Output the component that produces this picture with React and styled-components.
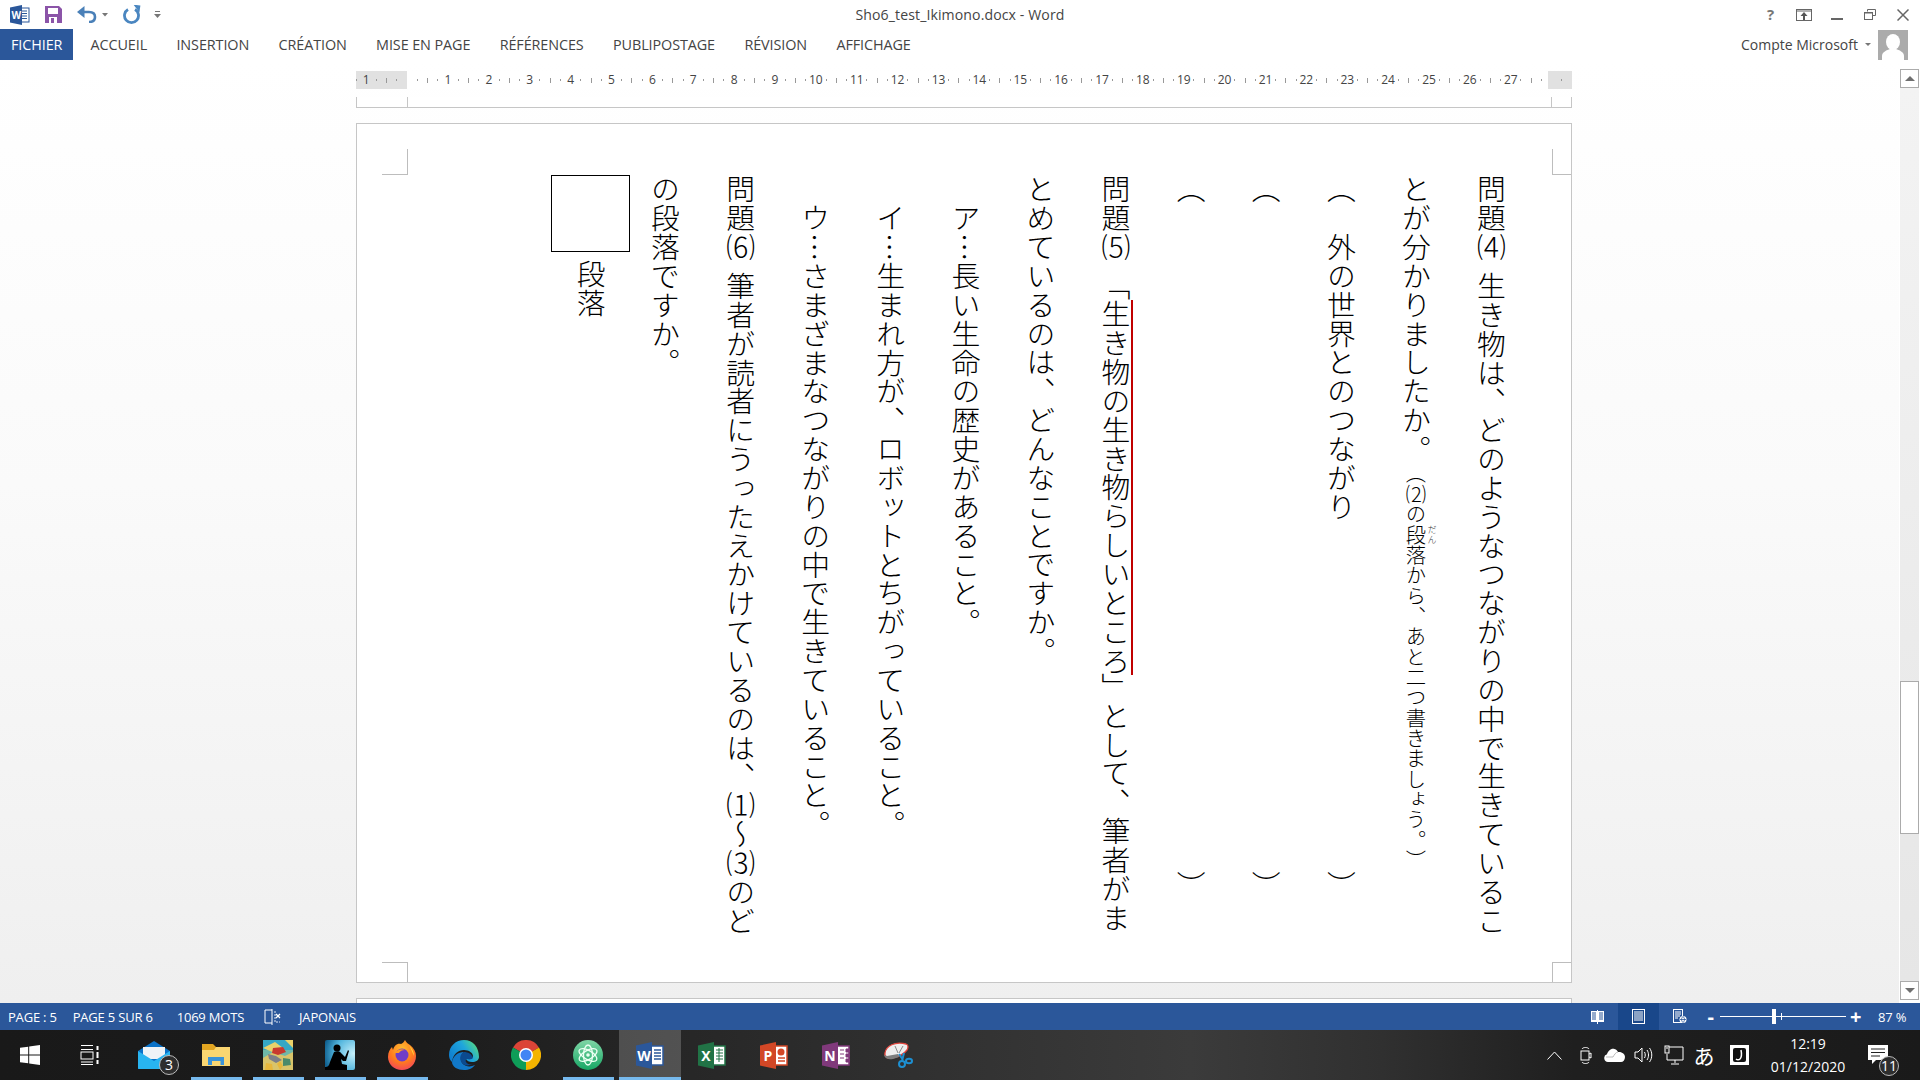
import React from "react";
import styled, { createGlobalStyle } from "styled-components";

const Global = createGlobalStyle`
  html, body { margin: 0; padding: 0; background: #fff; }
  #root { width: 1920px; height: 1080px; }
  * { box-sizing: border-box; }
`;

const UI = `"Open Sans", "Noto Sans", sans-serif`;

const Shell = styled.div`
  width: 1920px; height: 1080px; overflow: hidden;
  display: flex; flex-direction: column;
  font-family: ${UI}; background: #fff;
`;

const TitleBar = styled.div`
  height: 29px; flex: none; display: grid; grid-template-columns: 1fr auto 1fr; align-items: center;
`;
const Quick = styled.div`display: flex; align-items: center; padding-left: 10px; height: 100%;`;
const QuickSlot = styled.span`display: inline-flex; width: ${p => p.$w}px; align-items: center;`;
const DocTitle = styled.div`font-size: 14.1px; color: #444; letter-spacing: .1px;`;
const WinControls = styled.div`display: flex; justify-content: flex-end; align-items: center; padding-right: 1px;`;
const WinBtn = styled.span`display: inline-flex; width: 33px; justify-content: center; align-items: center; color: #666;`;
const Help = styled.span`font-size: 15px; font-weight: 700; color: #777; line-height: 1;`;

const TabRow = styled.div`height: 31px; flex: none; display: flex; justify-content: space-between; align-items: stretch;`;
const Tabs = styled.div`display: flex; align-items: stretch;`;
const Tab = styled.div`
  padding: 0 ${p => (p.$file ? 11 : 14.7)}px;
  display: flex; align-items: center;
  font-size: 14.4px; letter-spacing: -.1px;
  color: ${p => (p.$file ? "#fff" : "#444")};
  background: ${p => (p.$file ? "#2b579a" : "transparent")};
  margin-right: ${p => (p.$file ? 2.5 : 0)}px;
`;
const Account = styled.div`display: flex; align-items: center; gap: 7px; padding-right: 12px; font-size: 14px; color: #444;`;
const Caret = styled.span`width: 0; height: 0; border: 3px solid transparent; border-top: 3px solid #777; margin-top: 3px;`;
const Avatar = styled.div`width: 30px; height: 30px; background: #ababab; overflow: hidden;`;

const Workspace = styled.div`flex: 1; display: flex; min-height: 0;`;
const Canvas = styled.div`
  flex: 1; min-width: 0; padding: 11px 0 0 356px; overflow: hidden;
  background: linear-gradient(180deg, #ffffff 0%, #fafafa 45%, #efefef 100%);
`;
const Ruler = styled.div`
  width: 1216px; height: 18px; display: flex; align-items: center;
  background: linear-gradient(90deg, #e1e1e1 0 51px, #fff 51px 1192px, #e1e1e1 1192px 100%);
`;
const MarkSlot = styled.div`
  flex: none; width: 10.225px; display: flex; justify-content: center; align-items: center;
  &:first-child { margin-left: -5.1px; }
`;
const RulerNum = styled.span`font-size: 12px; color: #444; line-height: 1; white-space: nowrap;`;
const Dot = styled.span`width: 1px; height: 2px; background: #999; flex: none;`;
const Tick = styled.span`width: 1px; height: 5px; background: #999; flex: none;`;

const PageStub = styled.div`
  width: 1216px; height: 11px; margin-top: 8px; background: #fff;
  border: 1px solid #c6c6c6; border-top: 0; position: relative;
`;
const StubMark = styled.span`position: absolute; top: 0; bottom: 0; width: 1px; background: #c6c6c6; ${p => p.$side}: ${p => p.$at}px;`;

const Page = styled.div`
  position: relative; width: 1216px; height: 860px; margin-top: 15px; background: #fff;
  border: 1px solid #c6c6c6;
  padding: 51px 42px 0 0; display: flex; flex-direction: row-reverse; align-items: flex-start;
  font-family: "Noto Sans CJK JP", sans-serif; font-weight: 300; color: #000;
`;
const NextPage = styled.div`width: 1216px; height: 30px; margin-top: 15px; background: #fff; border: 1px solid #c6c6c6;`;

const Crop = styled.span`
  position: absolute; width: ${p => (p.$right ? 19 : 26)}px; height: ${p => (p.$bottom ? 20 : 26)}px;
  ${p => (p.$right ? "right: 0;" : "left: 25px;")}
  ${p => (p.$bottom ? "bottom: 0;" : "top: 25px;")}
  border-color: #bdbdbd; border-style: solid; border-width: 0;
  ${p => (p.$right ? "border-left-width: 1px;" : "border-right-width: 1px;")}
  ${p => (p.$bottom ? "border-top-width: 1px;" : "border-bottom-width: 1px;")}
`;

const Col = styled.div`
  flex: none; width: 75.1px; height: 800px;
  writing-mode: vertical-rl; text-orientation: mixed;
  font-size: 28.85px; line-height: 75px; white-space: nowrap;
  text-spacing-trim: space-all; font-kerning: none;
  padding-top: ${p => p.$indent || 0}px;
`;
const ParenCol = styled(Col)`display: flex; justify-content: space-between; height: ${p => p.$len}px; `;
const Gap = styled.span`display: inline-block; height: ${p => p.$h}px; width: 1px;`;
const Under = styled.span`
  display: inline-block; line-height: 29px; border-right: 2px solid #c00000; margin-bottom: -3px;
`;
const Small = styled.span`font-size: 20.35px;`;
const Ruby = styled.ruby`line-height: 1; ruby-position: over;`;
const Rt = styled.rt`font-size: 9px; color: #333; transform: translate(5px, -2px);`;
const BoxCol = styled.div`flex: none; width: 75.1px; display: flex; flex-direction: column; align-items: center;`;
const AnswerBox = styled.div`flex: none; width: 79px; height: 77px; border: 1.5px solid #000;`;
const BoxLabel = styled.div`
  writing-mode: vertical-rl; font-size: 28.85px; line-height: 1; margin-top: 8px; text-spacing-trim: space-all;
`;

const ScrollBar = styled.div`flex: none; width: 21px; padding: 9px 1px 3px 1px; display: flex; flex-direction: column;`;
const ScrollBtn = styled.div`
  flex: none; width: 19px; height: 19px; border: 1px solid #ababab; background: #fff;
  display: flex; align-items: center; justify-content: center;
`;
const Arrow = styled.span`
  width: 0; height: 0; border-left: 5px solid transparent; border-right: 5px solid transparent;
  ${p => (p.$down ? "border-top: 5px solid #6f6f6f;" : "border-bottom: 5px solid #6f6f6f;")}
`;
const Track = styled.div`
  flex: 1; width: 19px; padding-top: 593px;
  background: linear-gradient(180deg, #f3f3f3, #e6e6e6);
`;
const Thumb = styled.div`width: 19px; height: 153px; border: 1px solid #ababab; background: #fff;`;

const StatusBar = styled.div`
  height: 27px; flex: none; background: #2b579a; color: #fff; display: flex; align-items: center;
  justify-content: space-between; font-size: 13px; letter-spacing: -.2px;
`;
const StatusLeft = styled.div`display: flex; align-items: center; padding-left: 8px;`;
const StatusItem = styled.span`margin-right: ${p => p.$mr}px; white-space: nowrap; display: inline-flex;`;
const StatusRight = styled.div`display: flex; align-items: stretch; height: 100%; padding-right: 6px;`;
const ViewBtn = styled.span`
  width: 41px; display: flex; align-items: center; justify-content: center;
  background: ${p => (p.$on ? "#19478a" : "transparent")};
`;
const Zoom = styled.div`display: flex; align-items: center; margin-left: 6px;`;
const Slider = styled.div`position: relative; width: 126px; height: 1px; background: #fff; margin: 0 5px;`;
const SliderThumb = styled.span`position: absolute; left: 52px; top: -7px; width: 4px; height: 15px; background: #fff;`;
const SliderMid = styled.span`position: absolute; left: 61px; top: -3px; width: 1px; height: 7px; background: #fff;`;
const ZoomSign = styled.span`font-size: 20px; font-weight: 700; line-height: 1; width: 9px; display: flex; justify-content: center;`;
const ZoomPct = styled.span`margin-left: 18px; width: 36px; white-space: nowrap;`;

const Taskbar = styled.div`
  height: 50px; flex: none; display: flex; align-items: stretch; color: #fff;
  background: linear-gradient(90deg, #191919 0%, #1c1c1c 22%, #2e2e2e 45%, #3b3b3b 62%, #303030 72%, #1f1f1f 82%, #1a1a1a 100%);
`;
const Launcher = styled.div`flex: none; width: 60px; display: flex; align-items: center; justify-content: center;`;
const Apps = styled.div`display: flex; margin-left: 3px;`;
const AppCell = styled.div`
  position: relative; width: 62px; display: flex; align-items: center; justify-content: center;
  background: ${p => (p.$active ? "rgba(255,255,255,.2)" : "transparent")};
  &::after {
    content: ""; position: absolute; bottom: 0; height: 3px; background: #76b9ed;
    left: ${p => (p.$active ? 0 : 5.5)}px; right: ${p => (p.$active ? 0 : 5.5)}px;
    display: ${p => (p.$open ? "block" : "none")};
  }
`;
const Badge = styled.span`
  position: absolute; right: ${p => p.$r}px; bottom: ${p => p.$b}px; width: 20px; height: 20px; border-radius: 50%;
  background: #2e2e2e; border: 1px solid #bbb; font-size: 14px; color: #fff;
  display: flex; align-items: center; justify-content: center; line-height: 1;
`;
const Tray = styled.div`margin-left: auto; display: flex; align-items: stretch; padding-right: 16px;`;
const TrayCell = styled.div`width: ${p => p.$w}px; display: flex; align-items: center; justify-content: center;`;
const ImeGlyph = styled.span`font-family: "Noto Sans CJK JP", sans-serif; font-size: 21px; line-height: 1;`;
const Clock = styled.div`
  width: 88px; margin-left: 6px; display: flex; flex-direction: column; align-items: center; justify-content: center;
  gap: 5px; font-size: 14px; line-height: 18px;
`;
const Notify = styled.div`position: relative; width: 52px; display: flex; align-items: center; justify-content: center;`;

/* ---------- icons ---------- */
const WordSmall = () => (
  <svg width="20" height="20" viewBox="0 0 20 20">
    <rect x="7" y="3" width="12" height="14" fill="#fff" stroke="#2b579a" />
    <path d="M10 6h7M10 8.500h7M10 11h7M10 13.500h7" stroke="#2b579a" />
    <path d="M0 2.500 12 0v20L0 17.500z" fill="#2b579a" />
    <text x="1.500" y="14" fontSize="10" fontWeight="700" fill="#fff" fontFamily="Open Sans">W</text>
  </svg>
);
const SaveIcon = () => (
  <svg width="17" height="17" viewBox="0 0 17 17">
    <path d="M0 0h14l3 3v14H0z" fill="#8b54a8" />
    <rect x="3" y="2" width="10" height="6" fill="#fff" />
    <rect x="4" y="11" width="8" height="6" fill="#fff" />
    <rect x="6" y="12" width="3" height="5" fill="#8b54a8" />
  </svg>
);
const UndoIcon = () => (
  <svg width="20" height="17" viewBox="0 0 20 17">
    <path d="M3 6h9c4 0 6 2 6 5s-2 5-6 5" fill="none" stroke="#4a80b8" strokeWidth="2.600" />
    <path d="M7.500 0v12L0 6z" fill="#4a80b8" />
  </svg>
);
const RedoIcon = () => (
  <svg width="18" height="19" viewBox="0 0 18 19">
    <path d="M5 4.500a7 7 0 1 0 7 0" fill="none" stroke="#4a86c0" strokeWidth="2.800" />
    <path d="M10 0h7v7z" fill="#4a86c0" transform="rotate(8 13 3)" />
  </svg>
);
const SmallCaret = () => <svg width="6" height="4" viewBox="0 0 6 4"><path d="M0 0h6L3 3.500z" fill="#777" /></svg>;
const CustomizeIcon = () => (
  <svg width="7" height="8" viewBox="0 0 7 8"><path d="M1 0h5v1H1z" fill="#777" /><path d="M0 3h7L3.500 7z" fill="#777" /></svg>
);
const RibbonIcon = () => (
  <svg width="16" height="12" viewBox="0 0 16 12">
    <rect x=".5" y=".5" width="15" height="11" fill="none" stroke="#666" />
    <path d="M1 2h14" stroke="#666" />
    <path d="M8 3 4.500 7H7v4h2V7h2.500z" fill="#555" />
  </svg>
);
const MinIcon = () => <svg width="12" height="2" viewBox="0 0 12 2" style={{ marginTop: 8 }}><path d="M0 1h12" stroke="#666" strokeWidth="2" /></svg>;
const RestoreIcon = () => (
  <svg width="12" height="11" viewBox="0 0 12 11">
    <path d="M3.500 2.500V.5h8v6H8.500" fill="none" stroke="#666" />
    <rect x=".5" y="3.500" width="8" height="7" fill="none" stroke="#666" />
    <path d="M1 4h7" stroke="#666" />
  </svg>
);
const CloseIcon = () => <svg width="12" height="12" viewBox="0 0 12 12"><path d="M.5.500l11 11M11.500.5l-11 11" stroke="#666" strokeWidth="1.500" /></svg>;
const Person = () => (
  <svg width="30" height="30" viewBox="0 0 30 30">
    <rect width="30" height="30" fill="#ababab" />
    <ellipse cx="15" cy="12" rx="7" ry="8" fill="#fff" />
    <path d="M4 30v-4c0-4 5-6 8-7h6c3 1 8 3 8 7v4z" fill="#fff" />
  </svg>
);
const ProofIcon = () => (
  <svg width="18" height="16" viewBox="0 0 18 16">
    <path d="M8 1H1v13h7M8 0v16" fill="none" stroke="#fff" />
    <path d="M11 2v11h5" fill="none" stroke="#dfe7f3" strokeDasharray="2 1" />
    <path d="M12 5l4 4M16 5l-4 4" stroke="#fff" strokeWidth="1.300" />
  </svg>
);
const ReadIcon = () => (
  <svg width="13" height="14" viewBox="0 0 13 14">
    <path d="M0 1h6v11H0zM7 1h6v11H7z" fill="#fff" />
    <path d="M1 3h4M1 5h4M1 7h4M1 9h4M8 3h4M8 5h4M8 7h4M8 9h4" stroke="#2b579a" />
    <path d="M6.500 0v14" stroke="#fff" />
  </svg>
);
const PrintIcon = () => (
  <svg width="13" height="15" viewBox="0 0 13 15">
    <rect x=".5" y=".5" width="12" height="14" fill="none" stroke="#fff" />
    <path d="M2 3h9M2 5h9M2 7h9M2 9h9M2 11h9" stroke="#fff" />
  </svg>
);
const WebIcon = () => (
  <svg width="14" height="15" viewBox="0 0 14 15">
    <rect x=".5" y=".5" width="9" height="13" fill="none" stroke="#fff" />
    <path d="M2 3h6M2 5h6M2 7h5M2 9h3" stroke="#fff" />
    <circle cx="10" cy="10.500" r="3.500" fill="#fff" />
    <path d="M7 10.500h6M10 7.500c-2 2-2 4 0 6M10 7.500c2 2 2 4 0 6" stroke="#2b579a" strokeWidth=".8" fill="none" />
  </svg>
);
const WinLogo = () => (
  <svg width="20" height="20" viewBox="0 0 20 20">
    <path d="M0 2.800 8.200 1.700v7.800H0zM9.200 1.500 20 0v9.500H9.200zM0 10.500h8.200v7.800L0 17.200zM9.200 10.500H20V20L9.200 18.500z" fill="#fff" />
  </svg>
);
const TaskViewIcon = () => (
  <svg width="20" height="20" viewBox="0 0 20 20" fill="none" stroke="#fff">
    <path d="M1 .5h12M1 4.500h12" /><rect x="1" y="7" width="12" height="7" />
    <path d="M1 17h12M1 19.500h12" /><path d="M17.500 1v4M17.500 7v6M17.500 15v4" strokeWidth="2" />
  </svg>
);
const MailIcon = () => (
  <svg width="32" height="28" viewBox="0 0 32 28">
    <path d="M0 10 16 0l16 10v18H0z" fill="#0a72c8" />
    <path d="M5 4h22v12H5z" fill="#eef3f7" transform="translate(0 2)" />
    <path d="M0 10l16 10 16-10v17a1 1 0 0 1-1 1H1a1 1 0 0 1-1-1z" fill="#28b4f0" />
  </svg>
);
const FolderIcon = () => (
  <svg width="28" height="24" viewBox="0 0 28 24">
    <path d="M0 1h11l3 3h-14z" fill="#e2a521" />
    <path d="M0 4h28v19H0z" fill="#fad671" />
    <path d="M0 4h14l-2 3H0z" fill="#e2a521" />
    <path d="M6 22V14h16v8h-3.500v-4H10v4z" fill="#3b93d8" />
  </svg>
);
const PhotoTile = () => (
  <svg width="30" height="30" viewBox="0 0 30 30">
    <rect width="30" height="30" fill="#6fb8a8" />
    <rect width="30" height="10" fill="#35a7c4" />
    <path d="M0 8 12 2l8 6-6 6zM22 0h8v8z" fill="#e9d26a" />
    <path d="M0 18l10-6 12 4 8-4v18H0z" fill="#d9c46a" />
    <path d="M10 8l10-1 3 5-8 3-6-2z" fill="#c8392e" />
    <path d="M5 14l8 2 6 4-6 3-7-4z" fill="#7c7f88" />
    <path d="M20 18l7 1 1 6-8 1z" fill="#4b8a6a" />
    <path d="M3 23l6 1 1 6H2zM14 24l3-3 3 5-3 4z" fill="#e7b73c" />
  </svg>
);
const KindleIcon = () => (
  <svg width="30" height="30" viewBox="0 0 30 30">
    <defs><radialGradient id="kg" cx=".95" cy=".45" r="1"><stop offset="0" stopColor="#c5f0fb" /><stop offset=".6" stopColor="#52b5dd" /><stop offset="1" stopColor="#10608f" /></radialGradient></defs>
    <rect width="30" height="30" rx="2" fill="url(#kg)" />
    <circle cx="12" cy="8" r="3.500" />
    <path d="M9 12c3-1.500 6-1 7 1l4 4 3-7 1 1-3 10h-3l-2-2 1 5 5 1v5H0v-3c3 0 4-1 5-5z" />
  </svg>
);
const FirefoxIcon = () => (
  <svg width="28" height="30" viewBox="0 0 28 30">
    <defs><radialGradient id="ff" cx=".5" cy=".3" r=".8"><stop offset="0" stopColor="#ffbd2f" /><stop offset=".55" stopColor="#ff7a1f" /><stop offset="1" stopColor="#f0386b" /></radialGradient></defs>
    <path d="M14 30C6 30 0 24 0 17 0 12 2 9 4 7l1 3C6 6 9 3 13 4c3-1 3-3 4-4 1 2 3 4 5 5 4 3 6 7 6 11 0 8-6 14-14 14z" fill="url(#ff)" />
    <path d="M21 5c3 3 5 7 5 11-2-4-3-8-5-11z" fill="#ffd83a" />
    <circle cx="14" cy="15" r="6.500" fill="#6f3dc8" />
    <path d="M7 13c2-3 6-5 10-3-3 0-5 1-6 3z" fill="#ff9a1f" />
  </svg>
);
const EdgeIcon = () => (
  <svg width="30" height="30" viewBox="0 0 30 30">
    <defs>
      <linearGradient id="eg" x1="0" y1=".7" x2="1" y2=".2"><stop offset="0" stopColor="#0f7fcf" /><stop offset=".55" stopColor="#1fa6dc" /><stop offset="1" stopColor="#5ae07a" /></linearGradient>
    </defs>
    <path d="M30 17c0 3-3 5-7 5-3 0-5-1-6-3 4 0 7-1 7-3 0-3-4-6-9-6-6 0-11 4-12 12C1 20 0 18 0 15 0 6 7 0 15 0c9 0 15 7 15 17z" fill="url(#eg)" />
    <path d="M3 22c0 5 6 8 12 8 5 0 9-2 11-5-4 2-9 2-12-1-3-3-3-9 1-12-6 0-11 4-12 10z" fill="#1178c8" />
    <path d="M15 12c-4 2-5 7-2 11 2 3 7 3 11 1-3 1-6 0-7-2-1-1 0-3 1-3 3 1 5 0 6-1-1-4-5-6-9-6z" fill="#0b4a8f" />
  </svg>
);
const ChromeIcon = () => (
  <svg width="30" height="30" viewBox="0 0 30 30">
    <path d="M15 15 2 7.500A15 15 0 0 1 28 7.500Z" fill="#db4437" />
    <path d="M15 15 28 7.500A15 15 0 0 1 15 30Z" fill="#f4b400" />
    <path d="M15 15V30A15 15 0 0 1 2 7.500Z" fill="#0f9d58" />
    <circle cx="15" cy="15" r="7" fill="#fff" />
    <circle cx="15" cy="15" r="5.500" fill="#4285f4" />
  </svg>
);
const AtomIcon = () => (
  <svg width="30" height="30" viewBox="0 0 30 30">
    <defs><linearGradient id="ag" x1="0" y1="0" x2="0" y2="1"><stop offset="0" stopColor="#7fd6a6" /><stop offset="1" stopColor="#18a765" /></linearGradient></defs>
    <circle cx="15" cy="15" r="15" fill="url(#ag)" />
    <g fill="none" stroke="#eafff2" strokeWidth="1.300">
      <ellipse cx="15" cy="15" rx="10" ry="4.500" transform="rotate(30 15 15)" />
      <ellipse cx="15" cy="15" rx="10" ry="4.500" transform="rotate(-30 15 15)" />
      <ellipse cx="15" cy="15" rx="10" ry="4.500" transform="rotate(90 15 15)" />
    </g>
    <circle cx="15" cy="15" r="1.800" fill="#eafff2" />
  </svg>
);
const OfficeIcon = ({ color, letter, children }) => (
  <svg width="28" height="27" viewBox="0 0 28 27">
    <rect x="14" y="4" width="13" height="19" fill="#fff" stroke={color} strokeWidth="1.500" />
    {children}
    <path d="M0 3.500 16 0v27L0 23.500z" fill={color} />
    <text x="8" y="19" textAnchor="middle" fontSize="14" fontWeight="700" fill="#fff" fontFamily="Open Sans">{letter}</text>
  </svg>
);
const SnipIcon = () => (
  <svg width="30" height="28" viewBox="0 0 30 28">
    <path d="M2 12C3 5 12 0 23 3c3 1 2 4 1 6-3 4-9 7-15 8-4 1-8-1-7-5z" fill="#eee" stroke="#e0443c" strokeWidth="1.300" />
    <path d="M1 14c1 4 5 5 9 4l6-2-1-3L4 15z" fill="#7d7d7d" />
    <path d="M12 5l3 7M20 5l-4 7" stroke="#888" />
    <g fill="none" stroke="#1d8fd1" strokeWidth="2">
      <path d="M16 13l4 6M21 12l-2 8" />
      <circle cx="19" cy="23" r="3" />
      <ellipse cx="26" cy="20" rx="3" ry="2.200" />
    </g>
  </svg>
);
const CaretUp = () => <svg width="15" height="9" viewBox="0 0 15 9"><path d="M.5 8.500l7-7.500 7 7.500" fill="none" stroke="#fff" /></svg>;
const MeetIcon = () => (
  <svg width="13" height="19" viewBox="0 0 13 19" fill="none" stroke="#fff">
    <rect x="2" y="5" width="8" height="9" /><path d="M10 8l2-1v5l-2-1" />
    <path d="M3 3c1-2 6-2 7 0M3 16c1 2 6 2 7 0" />
  </svg>
);
const CloudIcon = () => (
  <svg width="21" height="14" viewBox="0 0 21 14"><path d="M4 14a4 4 0 0 1-1-7.800C4 3 7 0 10.500 1c2 .5 3 2 3.500 3 4-.5 7 2 7 5 0 3-2 5-4 5z" fill="#fff" /><path d="M14 4c-2 0-4 3-5 5H2" stroke="#bbb" fill="none" /></svg>
);
const SpeakerIcon = () => (
  <svg width="20" height="18" viewBox="0 0 20 18" fill="none" stroke="#fff">
    <path d="M1 6h3l4-4v14l-4-4H1z" /><path d="M10.500 6c1 2 1 4 0 6M13 4c2 3 2 7 0 10M15.500 2c3 4 3 10 0 14" />
  </svg>
);
const NetworkIcon = () => (
  <svg width="20" height="20" viewBox="0 0 20 20" fill="none" stroke="#fff">
    <path d="M5 2h14v13H3v-6" /><path d="M11 15v3M7 19h8" />
    <rect x="1" y="1" width="4" height="7" fill="#2a2a2a" />
    <path d="M2 3h2" />
  </svg>
);
const JIcon = () => (
  <svg width="19" height="20" viewBox="0 0 19 20">
    <rect width="19" height="20" fill="#fff" />
    <rect x="3" y="3" width="13" height="14" rx="2" fill="#111" />
    <path d="M11 5c1 5 1 7-1 9-1 1-3 1-4 0" fill="none" stroke="#fff" strokeWidth="1.500" />
  </svg>
);
const NotifyIcon = () => (
  <svg width="20" height="20" viewBox="0 0 20 20">
    <path d="M0 0h20v15H8l-4 4v-4H0z" fill="#fff" />
    <path d="M3 4h14M3 7.500h14M3 11h9" stroke="#222" strokeWidth="1.200" />
  </svg>
);

/* ---------- data ---------- */
const TAB_NAMES = ["ACCUEIL", "INSERTION", "CRÉATION", "MISE EN PAGE", "RÉFÉRENCES", "PUBLIPOSTAGE", "RÉVISION", "AFFICHAGE"];
const rulerMarks = [];
for (let i = -5; i <= 113; i++) rulerMarks.push(i);

const RulerMark = ({ i }) => {
  if (i === 0 || i === 112) return <MarkSlot />;
  if (i % 4 === 0) return <MarkSlot><RulerNum>{Math.abs(i) / 4}</RulerNum></MarkSlot>;
  if (Math.abs(i) % 4 === 2) return <MarkSlot><Tick /></MarkSlot>;
  return <MarkSlot><Dot /></MarkSlot>;
};

const APPS = [
  { key: "mail", icon: <MailIcon />, badge: true },
  { key: "folder", icon: <FolderIcon />, open: true },
  { key: "photo", icon: <PhotoTile />, open: true },
  { key: "kindle", icon: <KindleIcon />, open: true },
  { key: "firefox", icon: <FirefoxIcon />, open: true },
  { key: "edge", icon: <EdgeIcon /> },
  { key: "chrome", icon: <ChromeIcon /> },
  { key: "atom", icon: <AtomIcon />, open: true },
  { key: "word", icon: <OfficeIcon color="#2b579a" letter="W"><path d="M18 8h7M18 11h7M18 14h7M18 17h7" stroke="#2b579a" strokeWidth="1.500" /></OfficeIcon>, open: true, active: true },
  { key: "excel", icon: <OfficeIcon color="#217346" letter="X"><path d="M18 8h7M18 11h7M18 14h7M18 17h7M21 6v14" stroke="#217346" /></OfficeIcon> },
  { key: "ppt", icon: <OfficeIcon color="#d24726" letter="P"><circle cx="21" cy="10" r="3.500" fill="#d24726" /><path d="M18 16h7M18 19h7" stroke="#d24726" strokeWidth="1.500" /></OfficeIcon> },
  { key: "onenote", icon: <OfficeIcon color="#80397b" letter="N"><path d="M24 7h4v3h-4zM24 12h4v3h-4zM24 17h4v3h-4zM18 8h4M18 12h4M18 16h4" fill="#80397b" stroke="#80397b" /></OfficeIcon> },
  { key: "snip", icon: <SnipIcon /> },
];

export default function App() {
  return (
    <Shell>
      <Global />
      <TitleBar>
        <Quick>
          <QuickSlot $w={35}><WordSmall /></QuickSlot>
          <QuickSlot $w={32}><SaveIcon /></QuickSlot>
          <QuickSlot $w={25}><UndoIcon /></QuickSlot>
          <QuickSlot $w={21}><SmallCaret /></QuickSlot>
          <QuickSlot $w={31}><RedoIcon /></QuickSlot>
          <QuickSlot $w={10}><CustomizeIcon /></QuickSlot>
        </Quick>
        <DocTitle>Sho6_test_Ikimono.docx - Word</DocTitle>
        <WinControls>
          <WinBtn><Help>?</Help></WinBtn>
          <WinBtn><RibbonIcon /></WinBtn>
          <WinBtn><MinIcon /></WinBtn>
          <WinBtn><RestoreIcon /></WinBtn>
          <WinBtn><CloseIcon /></WinBtn>
        </WinControls>
      </TitleBar>
      <TabRow>
        <Tabs>
          <Tab $file>FICHIER</Tab>
          {TAB_NAMES.map(t => <Tab key={t}>{t}</Tab>)}
        </Tabs>
        <Account>
          <span>Compte Microsoft</span>
          <Caret />
          <Avatar><Person /></Avatar>
        </Account>
      </TabRow>
      <Workspace>
        <Canvas>
          <Ruler>{rulerMarks.map(i => <RulerMark key={i} i={i} />)}</Ruler>
          <PageStub><StubMark $side="left" $at={50} /><StubMark $side="right" $at={19} /></PageStub>
          <Page>
            <Crop /><Crop $right /><Crop $bottom /><Crop $right $bottom />
            <Col>問題⑷<Gap $h={10} />生き物は、どのようなつながりの中で生きているこ</Col>
            <Col>とが分かりましたか。<Small>（⑵の<Ruby>段<Rt>だん</Rt></Ruby>落から、あと二つ書きましょう。）</Small></Col>
            <ParenCol $len={725}><span>（　外の世界とのつながり</span><span>）</span></ParenCol>
            <ParenCol $len={725}><span>（</span><span>）</span></ParenCol>
            <ParenCol $len={725}><span>（</span><span>）</span></ParenCol>
            <Col>問題⑸<Gap $h={10} />「<Under>生き物の生き物らしいところ</Under>」として、筆者がま</Col>
            <Col>とめているのは、どんなことですか。</Col>
            <Col $indent={29}>ア…長い生命の歴史があること。</Col>
            <Col $indent={29}>イ…生まれ方が、ロボットとちがっていること。</Col>
            <Col $indent={29}>ウ…さまざまなつながりの中で生きていること。</Col>
            <Col>問題⑹<Gap $h={10} />筆者が読者にうったえかけているのは、⑴～⑶のど</Col>
            <Col>の段落ですか。</Col>
            <BoxCol>
              <AnswerBox />
              <BoxLabel>段落</BoxLabel>
            </BoxCol>
          </Page>
          <NextPage />
        </Canvas>
        <ScrollBar>
          <ScrollBtn><Arrow /></ScrollBtn>
          <Track><Thumb /></Track>
          <ScrollBtn><Arrow $down /></ScrollBtn>
        </ScrollBar>
      </Workspace>
      <StatusBar>
        <StatusLeft>
          <StatusItem $mr={16}>PAGE : 5</StatusItem>
          <StatusItem $mr={24}>PAGE 5 SUR 6</StatusItem>
          <StatusItem $mr={20}>1069 MOTS</StatusItem>
          <StatusItem $mr={17}><ProofIcon /></StatusItem>
          <StatusItem $mr={0}>JAPONAIS</StatusItem>
        </StatusLeft>
        <StatusRight>
          <ViewBtn><ReadIcon /></ViewBtn>
          <ViewBtn $on><PrintIcon /></ViewBtn>
          <ViewBtn><WebIcon /></ViewBtn>
          <Zoom>
            <ZoomSign>-</ZoomSign>
            <Slider><SliderThumb /><SliderMid /></Slider>
            <ZoomSign>+</ZoomSign>
            <ZoomPct>87 %</ZoomPct>
          </Zoom>
        </StatusRight>
      </StatusBar>
      <Taskbar>
        <Launcher><WinLogo /></Launcher>
        <Launcher><TaskViewIcon /></Launcher>
        <Apps>
          {APPS.map(a => (
            <AppCell key={a.key} $open={a.open} $active={a.active}>
              {a.icon}
              {a.badge && <Badge $r={6} $b={5}>3</Badge>}
            </AppCell>
          ))}
        </Apps>
        <Tray>
          <TrayCell $w={31}><CaretUp /></TrayCell>
          <TrayCell $w={30}><MeetIcon /></TrayCell>
          <TrayCell $w={29}><CloudIcon /></TrayCell>
          <TrayCell $w={30}><SpeakerIcon /></TrayCell>
          <TrayCell $w={29}><NetworkIcon /></TrayCell>
          <TrayCell $w={32}><ImeGlyph>あ</ImeGlyph></TrayCell>
          <TrayCell $w={38}><JIcon /></TrayCell>
          <Clock><span>12:19</span><span>01/12/2020</span></Clock>
          <Notify><NotifyIcon /><Badge $r={5} $b={4}>11</Badge></Notify>
        </Tray>
      </Taskbar>
    </Shell>
  );
}
